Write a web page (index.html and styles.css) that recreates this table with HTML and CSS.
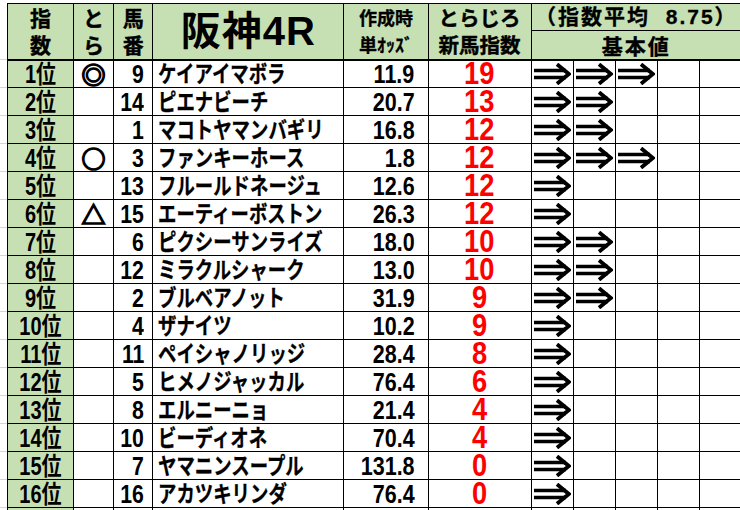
FILE: index.html
```html
<!DOCTYPE html>
<html lang="ja">
<head>
<meta charset="utf-8">
<link rel="stylesheet" href="styles.css">
</head>
<body>
<div class="sheet">
<table class="tbl">
  <colgroup>
    <col class="w-rank"><col class="w-mark"><col class="w-num"><col class="w-name"><col class="w-odds"><col class="w-idx">
    <col class="w-arr"><col class="w-arr"><col class="w-arr"><col class="w-arr"><col class="w-arr">
  </colgroup>
  <thead>
    <tr class="h1">
      <th rowspan="2" class="hd2">指<br>数</th>
      <th rowspan="2" class="hd2">と<br>ら</th>
      <th rowspan="2" class="hd2">馬<br>番</th>
      <th rowspan="2" class="title">阪神4R</th>
      <th rowspan="2" class="hd-odds">作成時<br>単ｵｯｽﾞ</th>
      <th rowspan="2" class="hd-idx">とらじろ<br>新馬指数</th>
      <th colspan="5" class="hd-avg">（指数平均&nbsp;&nbsp;8.75）</th>
    </tr>
    <tr class="h2">
      <th colspan="5" class="hd-base">基本値</th>
    </tr>
  </thead>
  <tbody id="rows"></tbody>
</table>
</div>
<script>
const data = [
  ["1位","◎","9","ケイアイマボラ","11.9","19",3],
  ["2位","","14","ピエナビーチ","20.7","13",2],
  ["3位","","1","マコトヤマンバギリ","16.8","12",2],
  ["4位","○","3","ファンキーホース","1.8","12",3],
  ["5位","","13","フルールドネージュ","12.6","12",1],
  ["6位","△","15","エーティーボストン","26.3","12",1],
  ["7位","","6","ピクシーサンライズ","18.0","10",2],
  ["8位","","12","ミラクルシャーク","13.0","10",2],
  ["9位","","2","ブルベアノット","31.9","9",2],
  ["10位","","4","ザナイツ","10.2","9",1],
  ["11位","","11","ペイシャノリッジ","28.4","8",1],
  ["12位","","5","ヒメノジャッカル","76.4","6",1],
  ["13位","","8","エルニーニョ","21.4","4",1],
  ["14位","","10","ビーディオネ","70.4","4",1],
  ["15位","","7","ヤマニンスープル","131.8","0",1],
  ["16位","","16","アカツキリンダ","76.4","0",1],
  ["","","","","","",1]
];
const arrow = '<svg class="arr" viewBox="0 0 38 22" width="38" height="22"><path d="M1 7.5H33M1 14.5H33" stroke="#000" stroke-width="3.6" fill="none"/><path d="M24 1.2L35.8 11L24 20.8" stroke="#000" stroke-width="3.8" fill="none" stroke-linejoin="miter" stroke-linecap="butt"/></svg>';
const t = s => s ? '<span class="t">' + s + '</span>' : '';
const tb = document.getElementById('rows');
data.forEach(r => {
  const tr = document.createElement('tr');
  let h = '<td class="rank">'+t(r[0])+'</td><td class="mark">'+r[1]+'</td><td class="num">'+t(r[2])+'</td><td class="name">'+t(r[3])+'</td><td class="odds">'+t(r[4])+'</td><td class="idx">'+t(r[5])+'</td>';
  for (let i = 0; i < 5; i++) h += '<td class="ac">' + (i < r[6] ? arrow : '') + '</td>';
  tr.innerHTML = h;
  tb.appendChild(tr);
});
</script>
</body>
</html>
```

FILE: styles.css
```css
html, body {
  margin: 0;
  padding: 0;
  background: #fff;
  overflow: hidden;
}
body {
  width: 740px;
  height: 510px;
}
.sheet {
  padding: 3px 0 0 7px;
  background-image:
    repeating-linear-gradient(to bottom, transparent 0 27px, #d4d4d4 27px 28px);
  background-position: 0 32px;
  background-size: 7px 100%;
  background-repeat: no-repeat;
}
.tbl {
  border-collapse: collapse;
  table-layout: fixed;
  width: 735px;
  font-family: "Liberation Sans", "Noto Sans CJK JP", sans-serif;
  font-weight: 700;
  color: #000;
}
.w-rank { width: 66px; }
.w-mark { width: 40px; }
.w-num { width: 39px; }
.w-name { width: 191px; }
.w-odds { width: 84px; }
.w-idx { width: 103px; }
.w-arr { width: 42px; }

.tbl th, .tbl td {
  border: 1px solid #000;
  padding: 0;
  white-space: nowrap;
}
.tbl th {
  background: #c6e0b4;
  font-weight: 700;
  text-align: center;
  vertical-align: middle;
}
.tbl thead tr.h2 th { border-bottom: 2px solid #000; }
.tbl thead th[rowspan] { border-bottom: 2px solid #000; }
.h1 { height: 27px; }
.h2 { height: 29px; }

.tbl .hd2 {
  font-family: "Noto Sans CJK JP", sans-serif;
  font-size: 21px;
  line-height: 27px;
  -webkit-text-stroke: 0.4px #000;
}
.tbl .title {
  font-size: 40px;
  line-height: 50px;
  letter-spacing: 1px;
}
.tbl .hd-odds {
  font-family: "Noto Sans CJK JP", sans-serif;
  font-size: 18px;
  line-height: 27px;
  -webkit-text-stroke: 0.3px #000;
}
.tbl .hd-idx {
  font-family: "Noto Sans CJK JP", sans-serif;
  font-size: 20.5px;
  line-height: 27px;
  -webkit-text-stroke: 0.4px #000;
}
.tbl .hd-avg {
  font-size: 21px;
  line-height: 24px;
  letter-spacing: 2px;
  -webkit-text-stroke: 0.3px #000;
}
.tbl .hd-base {
  font-family: "Noto Sans CJK JP", sans-serif;
  font-size: 21px;
  line-height: 26px;
  letter-spacing: 2px;
  -webkit-text-stroke: 0.4px #000;
}

.tbl tbody tr { height: 28px; }
.tbl td {
  font-size: 20px;
  line-height: 26px;
  vertical-align: middle;
}
.t {
  display: inline-block;
  line-height: 26px;
}
.tbl .rank {
  background: #c6e0b4;
  text-align: center;
  font-size: 25px;
}
.rank .t { transform: scaleX(0.8); transform-origin: center; }
.tbl .mark {
  text-align: center;
  font-family: "Noto Sans CJK JP", sans-serif;
  font-size: 24px;
  -webkit-text-stroke: 1.6px #000;
}
.tbl .num {
  text-align: right;
  padding-right: 8px;
  font-size: 25px;
}
.num .t { transform: scaleX(0.85); transform-origin: right center; }
.tbl .name {
  padding-left: 5px;
  font-size: 23px;
  -webkit-text-stroke: 0.3px #000;
}
.name .t { transform: scaleX(0.8); transform-origin: left center; }
.tbl .odds {
  text-align: right;
  padding-right: 13px;
  font-size: 25px;
}
.odds .t { transform: scaleX(0.86); transform-origin: right center; }
.tbl .idx {
  text-align: center;
  color: #ff0000;
  font-size: 31px;
}
.idx .t { transform: scaleX(0.88); transform-origin: center; }
.tbl .ac {
  vertical-align: middle;
}
.arr {
  display: block;
  margin-left: 1px;
}
```
